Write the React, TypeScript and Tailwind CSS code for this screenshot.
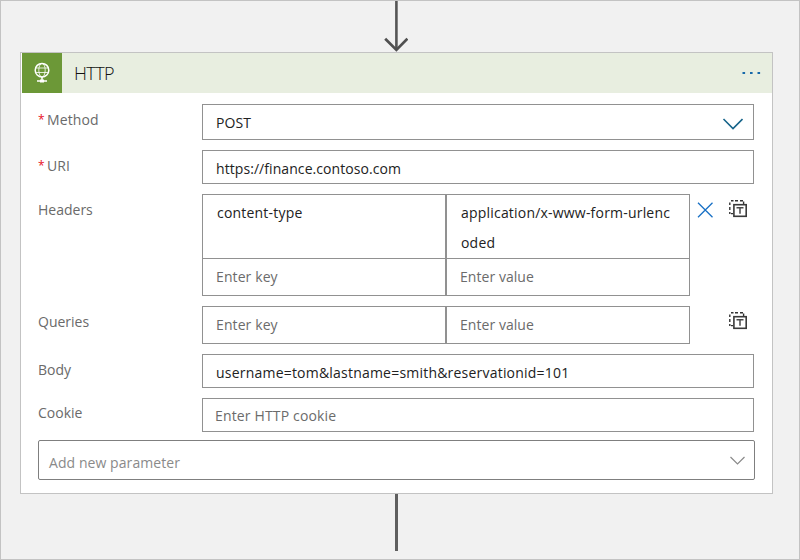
import type { ReactNode } from "react";

function Row({ label, required, children, labelClass = "leading-8" }: { label: string; required?: boolean; children: ReactNode; labelClass?: string }) {
  return (
    <div className="flex items-start">
      <div className={`w-[164px] shrink-0 flex text-[#6a6a6a] ${labelClass}`}>
        {required && <span className="w-[9px] text-xs text-[#e81123] leading-8">*</span>}
        <span className={required ? "tracking-[0.1px]" : ""}>{label}</span>
      </div>
      {children}
    </div>
  );
}

function KeyValueInputs() {
  return (
    <>
      <div className="w-1/2 border-r border-[#919191] pl-[13px] text-[#6b6b6b] tracking-[0.1px]">Enter key</div>
      <div className="w-1/2 border-l border-[#919191] pl-[13px] text-[#6b6b6b] tracking-[0.05px]">Enter value</div>
    </>
  );
}

function TextModeIcon() {
  return (
    <svg className="ml-[39px] mt-[6px] shrink-0" width="19" height="19" viewBox="0 0 19 19" fill="none">
      <path d="M2 .8h2.5M6 .8h3M11 .8h3M14.6 1.5v2.5M.8 2.5v2.5M.8 7v3M.8 12v2M2 13.6h2" stroke="#333" strokeWidth="1.4" />
      <rect x="4.9" y="4.7" width="12.3" height="11.6" fill="white" stroke="#3a3a3a" strokeWidth="1.6" />
      <path d="M7.5 7.7h7M11 7.7v6" stroke="#4a4a4a" strokeWidth="1.5" />
    </svg>
  );
}

export default function App() {
  return (
    <div className="flex h-[560px] w-[800px] flex-col border border-[#c3c3c3] bg-[#f1f1f1] pl-[19px] font-['Open_Sans','Noto_Sans',sans-serif] text-sm">
      <svg className="ml-[364px] h-[51px] w-6 shrink-0" viewBox="0 0 24 51" fill="none">
        <path d="M12.4 0v49" stroke="#555" strokeWidth="2.6" />
        <path d="M1.2 37.7l11.2 11.2L23.4 37.7" stroke="#505050" strokeWidth="2.7" />
      </svg>
      <div className="h-[442px] w-[753px] shrink-0 border border-[#c3c3c3] bg-white">
        <div className="flex h-10 items-center border-l border-white bg-[#e8eee0]">
          <div className="flex h-10 w-10 items-center justify-center bg-[#6c9837]">
            <svg width="20" height="22" viewBox="0 0 20 22" fill="none" stroke="white">
              <circle cx="10" cy="8.2" r="6.8" strokeWidth="1.5" />
              <ellipse cx="10" cy="8.2" rx="3.2" ry="6.8" strokeWidth=".8" />
              <path d="M3.7 6h12.6M3.7 10.5h12.6" strokeWidth=".8" />
              <path d="M10 15v4M5 19h10" strokeWidth="1.5" />
              <path d="M8 19h4" strokeWidth="3" />
            </svg>
          </div>
          <h1 className="ml-3 mt-0.5 text-[18px] font-light tracking-[-0.6px] text-[#111]">HTTP</h1>
          <svg className="ml-auto mr-[10px]" width="20" height="4" viewBox="0 0 20 4" fill="#1769aa">
            <rect x="0.5" y="1" width="2.6" height="2" />
            <rect x="8" y="1" width="2.6" height="2" />
            <rect x="15.5" y="1" width="2.6" height="2" />
          </svg>
        </div>
        <div className="flex flex-col gap-[10px] pl-[17px] pt-[11px]">
          <Row label="Method" required>
            <div className="flex h-9 w-[552px] items-center justify-between border border-[#919191] pl-[13px] pr-[10px] text-[#222]">
              <span className="mt-0.5 tracking-[0.1px]">POST</span>
              <svg width="21" height="12" viewBox="0 0 21 12" fill="none" className="mt-1">
                <path d="M1.5 1l9.5 9.5L20.5 1" stroke="#17648a" strokeWidth="1.6" />
              </svg>
            </div>
          </Row>
          <Row label="URI" required>
            <div className="h-[34px] w-[552px] border border-[#919191] pl-[13px] leading-[35px] tracking-[0.07px] text-[#222]">https://finance.contoso.com</div>
          </Row>
          <Row label="Headers">
            <div className="h-[102px] w-[488px] border border-[#919191]">
              <div className="flex h-16 border-b border-[#919191] leading-[30px] tracking-[0.2px] text-[#222]">
                <div className="w-1/2 border-r border-[#919191] pl-[14px] pt-[3px]">content-type</div>
                <div className="w-1/2 border-l border-[#919191] pl-[14px] pt-[3px]">application/x-www-form-urlenc<br />oded</div>
              </div>
              <div className="flex h-9 leading-[35px]"><KeyValueInputs /></div>
            </div>
            <svg className="ml-[7px] mt-[8px] shrink-0" width="17" height="17" viewBox="0 0 17 17" fill="none">
              <path d="M1 .7l14.5 14.5M15.5 .7L1 15.2" stroke="#1870c5" strokeWidth="1.3" />
            </svg>
            <div className="-ml-6"><TextModeIcon /></div>
          </Row>
          <Row label="Queries">
            <div className="flex h-[38px] w-[488px] border border-[#919191] leading-[36px]"><KeyValueInputs /></div>
            <TextModeIcon />
          </Row>
          <Row label="Body">
            <div className="h-[34px] w-[552px] border border-[#919191] pl-[13px] leading-[35px] tracking-[0.21px] text-[#222]">username=tom&amp;lastname=smith&amp;reservationid=101</div>
          </Row>
          <Row label="Cookie" labelClass="leading-[30px]">
            <div className="h-[34px] w-[552px] border border-[#919191] pl-3 leading-[33px] tracking-[0.15px] text-[#6b6b6b]">Enter HTTP cookie</div>
          </Row>
          <div className="-mt-[2px] flex h-10 w-[717px] items-center justify-between rounded-[2px] border border-[#7f7f7f] pl-[10px] pr-[9px] text-[#8a8a8a]">
            <span className="mt-1.5 tracking-[0.07px]">Add new parameter</span>
            <svg width="16" height="9" viewBox="0 0 16 9" fill="none">
              <path d="M1.5 1l7 7 7-7" stroke="#8a8a8a" strokeWidth="1.2" />
            </svg>
          </div>
        </div>
      </div>
      <div className="ml-[375px] h-[57px] w-[3px] shrink-0 bg-[#5f5f5f]" />
    </div>
  );
}
